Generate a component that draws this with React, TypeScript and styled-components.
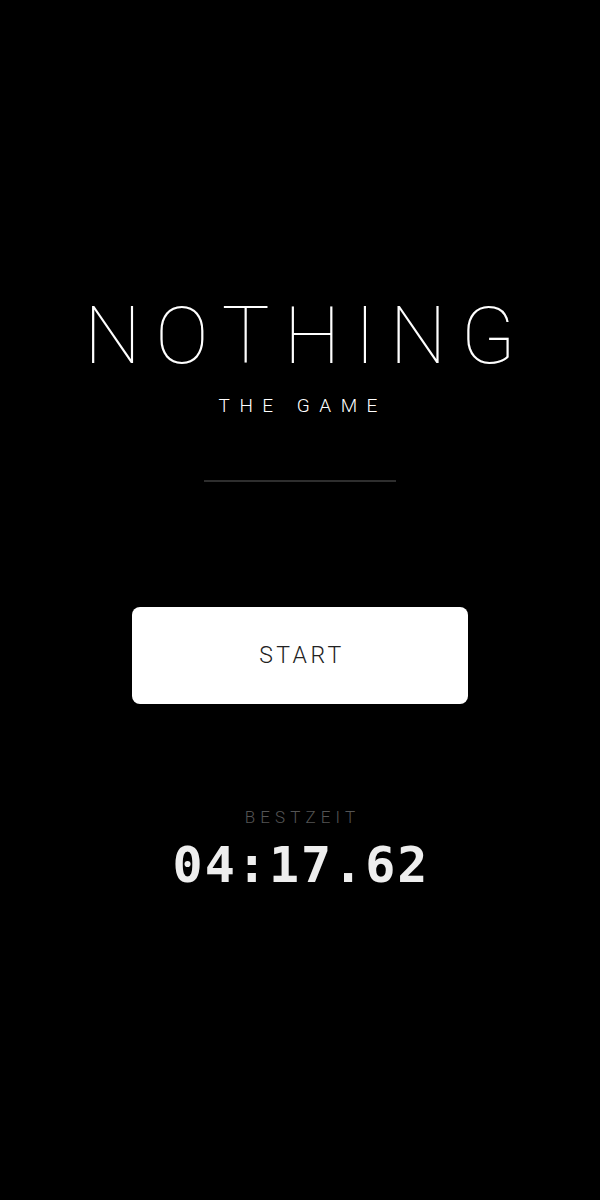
import { createGlobalStyle, styled } from "styled-components";

const GlobalStyle = createGlobalStyle`
  html, body {
    margin: 0;
    padding: 0;
    background: #000;
  }
  body {
    font-family: Roboto, "Noto Sans", sans-serif;
  }
`;

const Screen = styled.main`
  width: 600px;
  height: 1200px;
  background: #000;
  display: flex;
  flex-direction: column;
  align-items: center;
  padding-top: 291px;
  box-sizing: border-box;
`;

const Title = styled.h1`
  margin: 0;
  font-family: Roboto, sans-serif;
  font-weight: 100;
  font-size: 80px;
  line-height: 90px;
  letter-spacing: 0.18em;
  margin-right: -0.18em;
  color: #fff;
`;

const Subtitle = styled.div`
  margin-top: 13px;
  font-family: Roboto, sans-serif;
  font-weight: 300;
  font-size: 19px;
  letter-spacing: 0.5em;
  margin-right: -0.5em;
  padding-right: 4px;
  color: #fff;
`;

const Divider = styled.hr`
  width: 192px;
  height: 2px;
  border: 0;
  margin: 63px 0 0;
  background: #2e2e2e;
`;

const StartButton = styled.button`
  margin-top: 125px;
  width: 336px;
  height: 97px;
  border: 0;
  border-radius: 8px;
  background: #fff;
  color: #222;
  font-family: Roboto, sans-serif;
  font-weight: 300;
  font-size: 23px;
  letter-spacing: 0.15em;
  padding: 0 0 0 4px;
  cursor: pointer;
`;

const BestLabel = styled.div`
  margin-top: 103px;
  font-family: Roboto, sans-serif;
  font-weight: 300;
  font-size: 17px;
  letter-spacing: 0.3em;
  margin-right: -0.3em;
  color: #555;
`;

const BestTime = styled.div`
  margin-top: 9px;
  font-family: "DejaVu Sans Mono", "Liberation Mono", monospace;
  font-weight: 700;
  font-size: 50px;
  letter-spacing: 2px;
  margin-right: -2px;
  color: #eee;
`;

export default function App() {
  return (
    <>
      <GlobalStyle />
      <Screen>
        <Title>NOTHING</Title>
        <Subtitle>THE GAME</Subtitle>
        <Divider />
        <StartButton>START</StartButton>
        <BestLabel>BESTZEIT</BestLabel>
        <BestTime>04:17.62</BestTime>
      </Screen>
    </>
  );
}
